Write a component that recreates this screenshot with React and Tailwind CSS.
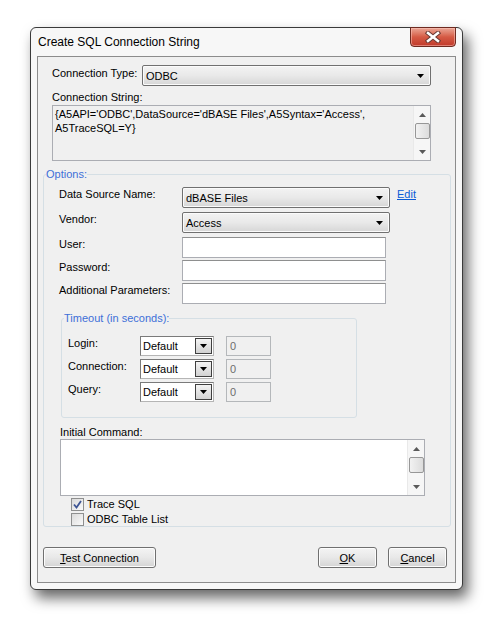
import React from "react";

function Tri({ up = false, color = "#000" }) {
  return (
    <svg width="7" height="4" viewBox="0 0 7 4">
      {up ? <path d="M0 4h7L3.5 0z" fill={color} /> : <path d="M0 0h7L3.5 4z" fill={color} />}
    </svg>
  );
}

function Combo({ value, className = "" }) {
  return (
    <div
      className={`flex items-center justify-between h-[21px] rounded-[2px] border border-[#707070] bg-gradient-to-b from-[#f3f3f3] via-[#e9e9e9] to-[#d6d6d6] shadow-[inset_0_0_0_1px_#fbfbfb] pl-[3px] pr-[6px] ${className}`}
    >
      <span className="pt-[1px]">{value}</span>
      <Tri />
    </div>
  );
}

function OldCombo({ value }) {
  return (
    <div className="flex items-center justify-between w-[74px] h-[20px] border border-[#7a7a7a] border-r-[#b5b5b5] border-b-[#b5b5b5] bg-white pl-[2px] pr-[1px]">
      <span>{value}</span>
      <div className="flex items-center justify-center w-[17px] h-[16px] border border-[#3f3f3f] bg-gradient-to-b from-[#f4f4f4] to-[#d2d2d2]">
        <Tri />
      </div>
    </div>
  );
}

function TextInput() {
  return <div className="w-[204px] h-[21px] border border-[#abadb3] border-t-[#8e8f8f] bg-white" />;
}

function VScroll() {
  return (
    <div className="flex flex-col w-[17px] h-full border-l border-[#e9e9e9] bg-[#f6f6f6]">
      <div className="h-[17px] flex items-center justify-center">
        <Tri up color="#5a5a5a" />
      </div>
      <div className="mx-auto w-[15px] h-[16px] rounded-[2px] border border-[#979797] bg-gradient-to-r from-[#f2f2f2] to-[#dcdcdc]" />
      <div className="flex-1" />
      <div className="h-[17px] flex items-center justify-center">
        <Tri color="#5a5a5a" />
      </div>
    </div>
  );
}

function Check({ checked }) {
  return (
    <div className="flex items-center justify-center w-[13px] h-[13px] border border-[#8e8f8f] bg-gradient-to-br from-[#dadada] to-[#fafafa]">
      {checked && (
        <svg width="9" height="9" viewBox="0 0 9 9">
          <path d="M1 4.5 L3.5 7.5 L8 1" fill="none" stroke="#3d5494" strokeWidth="1.8" />
        </svg>
      )}
    </div>
  );
}

function Button({ children, className = "" }) {
  return (
    <button
      className={`h-[21px] rounded-[3px] border border-[#707070] bg-gradient-to-b from-[#f4f4f4] via-[#e8e8e8] to-[#d4d4d4] shadow-[inset_0_0_0_1px_#fcfcfc] ${className}`}
    >
      {children}
    </button>
  );
}

function CloseButton() {
  return (
    <div className="-mt-[1px] flex items-center justify-center w-[46px] h-[20px] rounded-b-[4px] border border-[#6e2a20] bg-gradient-to-b from-[#e9a696] via-[#d55a44] to-[#c0392b] shadow-[inset_0_0_0_1px_rgba(255,200,190,0.5)]">
      <svg width="16" height="12" viewBox="0 0 16 12">
        <path d="M3 2 L13 10 M13 2 L3 10" stroke="#6a3a34" strokeWidth="4.5" strokeLinecap="square" />
        <path d="M3 2 L13 10 M13 2 L3 10" stroke="#fff" strokeWidth="2.5" strokeLinecap="square" />
      </svg>
    </div>
  );
}

export default function App() {
  return (
    <div className="min-h-screen w-full bg-white pl-[30px] pt-[27px] font-['Liberation_Sans',Arial,sans-serif] text-[11px] leading-[14px] text-black">
      <div className="flex flex-col w-[433px] h-[563px] rounded-[6px] border border-[#3a3a3a] bg-[#f7f7f7] px-[6px] pb-[6px] shadow-[5px_8px_14px_rgba(0,0,0,0.6)]">
        {/* Title bar */}
        <div className="flex justify-between h-[28px]">
          <div className="pl-[1px] pt-[7px] text-[12px] leading-[15px]">Create SQL Connection String</div>
          <CloseButton />
        </div>

        {/* Client area */}
        <div className="flex flex-col flex-1 border border-[#8c8c8c] bg-[#f0f0f0]">
          <div className="flex items-start mt-[8px] pl-[14px]">
            <div className="w-[90px] pt-[1px]">Connection Type:</div>
            <Combo value="ODBC" className="w-[289px]" />
          </div>

          <div className="mt-[4px] ml-[14px]">Connection String:</div>
          <div className="flex mt-[1px] ml-[14px] w-[379px] h-[56px] border border-[#abadb3] bg-[#f0f0f0]">
            <div className="flex-1 pl-[2px] pt-[1px]">
              {"{A5API='ODBC',DataSource='dBASE Files',A5Syntax='Access',"}
              <br />
              {"A5TraceSQL=Y}"}
            </div>
            <VScroll />
          </div>

          {/* Options */}
          <fieldset className="mt-[6px] ml-[5px] w-[408px] rounded-[3px] border border-[#d5dfe5] pl-[15px]">
            <legend className="-ml-[13px] text-[#3d6fd8]">Options:</legend>

            <div className="flex items-start mt-[6px]">
              <div className="w-[123px]">Data Source Name:</div>
              <Combo value="dBASE Files" className="w-[208px]" />
              <span className="ml-[7px] text-[#0a5bd6] underline">Edit</span>
            </div>
            <div className="flex items-start mt-[4px]">
              <div className="w-[123px]">Vendor:</div>
              <Combo value="Access" className="w-[208px]" />
            </div>
            <div className="flex items-start mt-[4px]">
              <div className="w-[123px]">User:</div>
              <TextInput />
            </div>
            <div className="flex items-start mt-[2px]">
              <div className="w-[123px]">Password:</div>
              <TextInput />
            </div>
            <div className="flex items-start mt-[2px]">
              <div className="w-[123px]">Additional Parameters:</div>
              <TextInput />
            </div>

            {/* Timeout */}
            <fieldset className="mt-[7px] ml-[2px] w-[296px] rounded-[3px] border border-[#d5dfe5] pl-[6px] pb-[15px]">
              <legend className="-ml-[4px] text-[#3d6fd8]">Timeout (in seconds):</legend>
              <div className="flex flex-col gap-[3px] mt-[11px]">
                {["Login:", "Connection:", "Query:"].map((l) => (
                  <div key={l} className="flex items-start">
                    <div className="w-[72px]">{l}</div>
                    <OldCombo value="Default" />
                    <div className="ml-[12px] w-[45px] h-[20px] border border-[#b4b7ba] bg-[#f0f0f0] pl-[3px] pt-[2px] text-[#6d6d6d]">
                      0
                    </div>
                  </div>
                ))}
              </div>
            </fieldset>

            <div className="mt-[7px] ml-[1px]">Initial Command:</div>
            <div className="flex ml-[1px] w-[365px] h-[57px] border border-[#abadb3] bg-white">
              <div className="flex-1" />
              <VScroll />
            </div>

            <div className="flex items-center mt-[1px] ml-[12px] h-[14px]">
              <Check checked />
              <span className="ml-[3px]">Trace SQL</span>
            </div>
            <div className="flex items-center mt-[1px] ml-[12px] h-[14px]">
              <Check />
              <span className="ml-[3px]">ODBC Table List</span>
            </div>
          </fieldset>

          {/* Footer buttons */}
          <div className="flex justify-between mt-[20px] pl-[5px] pr-[8px]">
            <Button className="w-[113px]">
              <span className="underline">T</span>est Connection
            </Button>
            <div className="flex gap-[11px]">
              <Button className="w-[59px]">
                <span className="underline">O</span>K
              </Button>
              <Button className="w-[59px]">
                <span className="underline">C</span>ancel
              </Button>
            </div>
          </div>
        </div>
      </div>
    </div>
  );
}
